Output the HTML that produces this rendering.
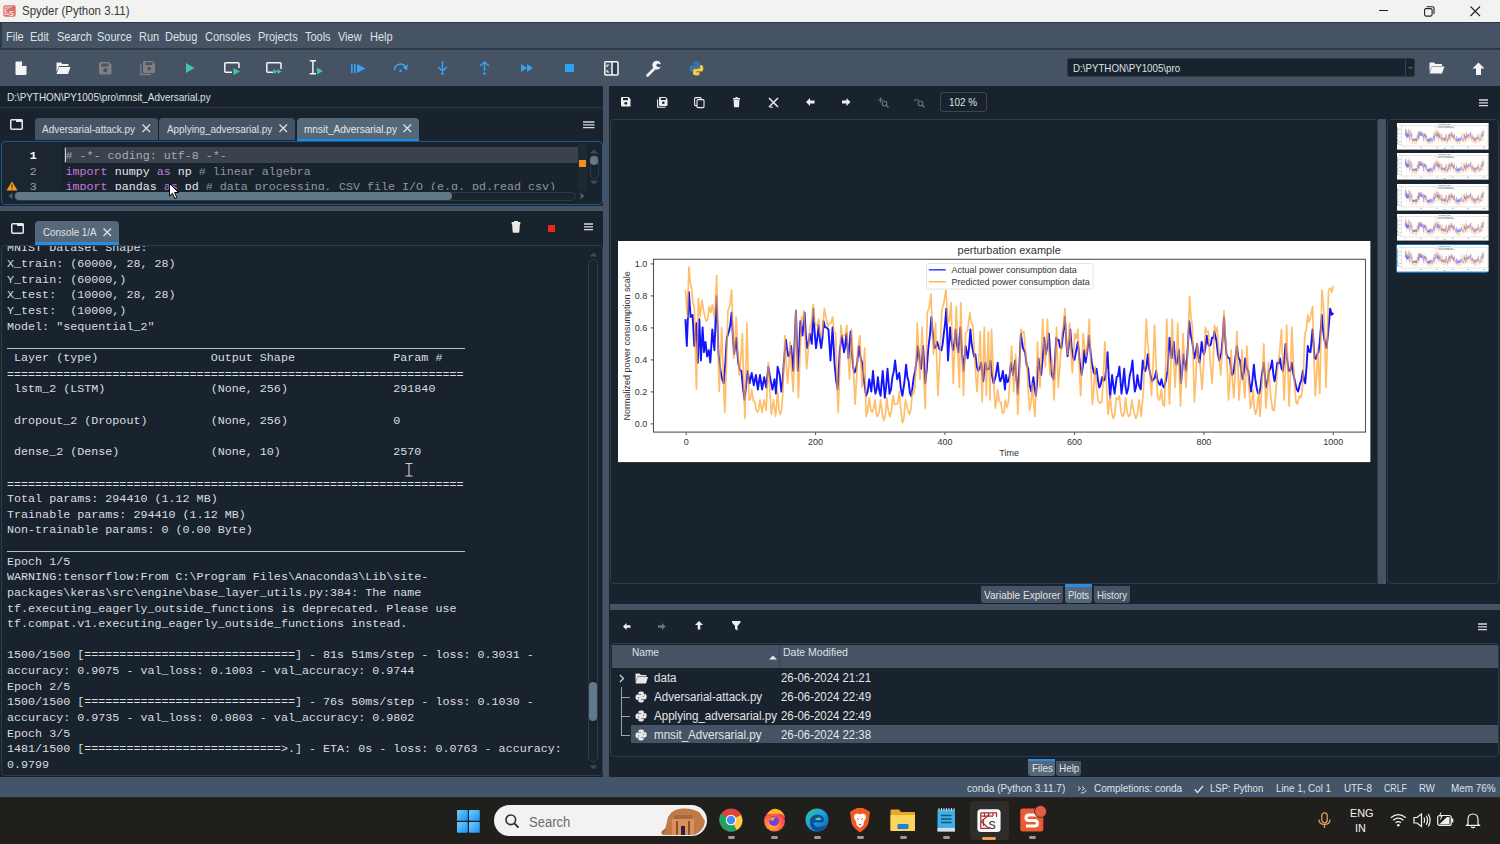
<!DOCTYPE html>
<html><head><meta charset="utf-8">
<style>
*{margin:0;padding:0;box-sizing:border-box}
html,body{width:1500px;height:844px;overflow:hidden;background:#19232d;font-family:"Liberation Sans",sans-serif;color:#e0e1e3;position:relative}
.a{position:absolute}
.t{line-height:1;white-space:pre}
svg{overflow:visible}
</style></head><body>
<!-- p1 -->
<div class="a" style="left:0px;top:0px;width:1500px;height:22px;background:#f2f2f1;"></div>
<svg class="a" style="left:3px;top:5px;" width="13" height="12" viewBox="0 0 13 12"><rect x="0.3" y="0.3" width="12.4" height="11.4" rx="2" fill="#d9706e"/><path d="M2 2 H9 M2 2 V9.5 H6 M2 6 L6 2.5 M2 6 L6 9.5" fill="none" stroke="#f6dede" stroke-width="0.9"/><text x="6" y="10.8" font-size="9.5" font-family="Liberation Sans" fill="#fff">s</text></svg>
<div class="a t" style="left:21.5px;top:5.24px;font-size:12px;font-family:'Liberation Sans',sans-serif;color:#383838;transform:scaleX(0.955);transform-origin:0 0;">Spyder (Python 3.11)</div>
<div class="a" style="left:1379px;top:10px;width:9px;height:1px;background:#222;"></div>
<svg class="a" style="left:1424px;top:6px;" width="11" height="11" viewBox="0 0 11 11"><rect x="0.6" y="2.6" width="7.5" height="7.5" rx="1.5" fill="none" stroke="#222" stroke-width="1.1"/><path d="M2.6 0.8 H8.5 A1.5 1.5 0 0 1 10 2.3 V8" fill="none" stroke="#222" stroke-width="1.1"/></svg>
<svg class="a" style="left:1470px;top:6px;" width="11" height="11" viewBox="0 0 11 11"><path d="M0.5 0.5 L10 10 M10 0.5 L0.5 10" stroke="#222" stroke-width="1.1"/></svg>
<div class="a" style="left:0px;top:22px;width:1500px;height:28px;background:#455364;"></div>
<div class="a" style="left:0px;top:22px;width:1500px;height:1px;background:#2c3744;"></div>
<div class="a" style="left:0px;top:48px;width:1500px;height:1.5px;background:#2f3a47;"></div>
<div class="a" style="left:0px;top:22px;width:1.5px;height:27px;background:#2f3a47;"></div>
<div class="a t" style="left:5.6px;top:30.57px;font-size:12.2px;font-family:'Liberation Sans',sans-serif;color:#dfe1e4;transform:scaleX(0.9);transform-origin:0 0;">File</div>
<div class="a t" style="left:29.6px;top:30.57px;font-size:12.2px;font-family:'Liberation Sans',sans-serif;color:#dfe1e4;transform:scaleX(0.9);transform-origin:0 0;">Edit</div>
<div class="a t" style="left:56.5px;top:30.57px;font-size:12.2px;font-family:'Liberation Sans',sans-serif;color:#dfe1e4;transform:scaleX(0.9);transform-origin:0 0;">Search</div>
<div class="a t" style="left:97px;top:30.57px;font-size:12.2px;font-family:'Liberation Sans',sans-serif;color:#dfe1e4;transform:scaleX(0.9);transform-origin:0 0;">Source</div>
<div class="a t" style="left:138.5px;top:30.57px;font-size:12.2px;font-family:'Liberation Sans',sans-serif;color:#dfe1e4;transform:scaleX(0.9);transform-origin:0 0;">Run</div>
<div class="a t" style="left:164.5px;top:30.57px;font-size:12.2px;font-family:'Liberation Sans',sans-serif;color:#dfe1e4;transform:scaleX(0.9);transform-origin:0 0;">Debug</div>
<div class="a t" style="left:205.4px;top:30.57px;font-size:12.2px;font-family:'Liberation Sans',sans-serif;color:#dfe1e4;transform:scaleX(0.9);transform-origin:0 0;">Consoles</div>
<div class="a t" style="left:258.2px;top:30.57px;font-size:12.2px;font-family:'Liberation Sans',sans-serif;color:#dfe1e4;transform:scaleX(0.9);transform-origin:0 0;">Projects</div>
<div class="a t" style="left:305px;top:30.57px;font-size:12.2px;font-family:'Liberation Sans',sans-serif;color:#dfe1e4;transform:scaleX(0.9);transform-origin:0 0;">Tools</div>
<div class="a t" style="left:338.4px;top:30.57px;font-size:12.2px;font-family:'Liberation Sans',sans-serif;color:#dfe1e4;transform:scaleX(0.9);transform-origin:0 0;">View</div>
<div class="a t" style="left:370px;top:30.57px;font-size:12.2px;font-family:'Liberation Sans',sans-serif;color:#dfe1e4;transform:scaleX(0.9);transform-origin:0 0;">Help</div>
<div class="a" style="left:0px;top:50px;width:1500px;height:36px;background:#455364;"></div>
<svg class="a" style="left:15px;top:61px;" width="12" height="15" viewBox="0 0 12 15"><path d="M0.5 1.5 Q0.5 0.5 1.5 0.5 H7 L11.5 5 V13 Q11.5 14 10.5 14 H1.5 Q0.5 14 0.5 13 Z" fill="#f4f4f4"/><path d="M7 0.5 V5 H11.5" fill="#455364"/><path d="M7.8 1.5 L10.8 4.5 H7.8Z" fill="#555"/></svg>
<svg class="a" style="left:56px;top:62px;" width="15" height="13" viewBox="0 0 15 13"><path d="M0.5 1 Q0.5 0.5 1 0.5 H5 L6.5 2 H12 Q12.5 2 12.5 2.5 V4 H3 L0.5 10Z" fill="#f4f4f4"/><path d="M3 5 H14.5 L12 12 H0.5Z" fill="#f4f4f4"/></svg>
<svg class="a" style="left:99px;top:62px;" width="13" height="13" viewBox="0 0 13 13"><path d="M0 1.5 Q0 0 1.5 0 H10 L12.5 2.5 V11 Q12.5 12.5 11 12.5 H1.5 Q0 12.5 0 11Z" fill="#7d7f82"/><rect x="2.5" y="1.5" width="7" height="3" fill="#455364"/><circle cx="6.2" cy="8.3" r="2" fill="#455364"/></svg>
<svg class="a" style="left:140px;top:61px;" width="16" height="15" viewBox="0 0 16 15"><path d="M0.8 3.5 V13.5 H11" fill="none" stroke="#7d7f82" stroke-width="1.3"/><path d="M3 1.5 Q3 0 4.5 0 H12.5 L15 2.5 V10.5 Q15 12 13.5 12 H4.5 Q3 12 3 10.5Z" fill="#7d7f82"/><rect x="5.5" y="1.3" width="7" height="2.7" fill="#455364"/><circle cx="9" cy="7.8" r="1.8" fill="#455364"/></svg>
<svg class="a" style="left:186px;top:63px;" width="9" height="11" viewBox="0 0 9 11"><path d="M0 0 L8.5 5 L0 10Z" fill="#3ec7a6"/></svg>
<svg class="a" style="left:224px;top:62px;" width="17" height="14" viewBox="0 0 17 14"><path d="M8 10.3 H1.8 Q0.8 10.3 0.8 9.3 V1.8 Q0.8 0.8 1.8 0.8 H14 Q15 0.8 15 1.8 V6" fill="none" stroke="#f4f4f4" stroke-width="1.5"/><path d="M9.5 6 L16 9.5 L9.5 13Z" fill="#3ec7a6"/></svg>
<svg class="a" style="left:266px;top:62px;" width="17" height="14" viewBox="0 0 17 14"><path d="M7 10.3 H1.8 Q0.8 10.3 0.8 9.3 V1.8 Q0.8 0.8 1.8 0.8 H14 Q15 0.8 15 1.8 V7" fill="none" stroke="#f4f4f4" stroke-width="1.5"/><path d="M7.5 7 L11.5 9.5 L7.5 12Z M11.5 7 L15.5 9.5 L11.5 12Z" fill="#3ec7a6"/></svg>
<svg class="a" style="left:309px;top:60px;" width="15" height="16" viewBox="0 0 15 16"><path d="M0.8 0.8 H7 M0.8 13.8 H7 M3.9 0.8 V13.8" fill="none" stroke="#f4f4f4" stroke-width="1.5"/><path d="M8 7.5 L14 11 L8 14.5Z" fill="#3ec7a6"/></svg>
<svg class="a" style="left:351px;top:64px;" width="16" height="10" viewBox="0 0 16 10"><rect x="0" y="0" width="1.6" height="9" fill="#37a3f2"/><rect x="3" y="0" width="1.6" height="9" fill="#37a3f2"/><path d="M6 0 L14.5 4.5 L6 9Z" fill="#37a3f2"/></svg>
<svg class="a" style="left:393px;top:62px;" width="17" height="11" viewBox="0 0 17 11"><path d="M1.5 8.5 A6 6 0 0 1 12.5 4.8" fill="none" stroke="#37a3f2" stroke-width="1.6"/><path d="M9.5 5.5 L15 2.5 L14 8.5Z" fill="#37a3f2"/><circle cx="7.5" cy="8.7" r="1.3" fill="#37a3f2"/></svg>
<svg class="a" style="left:437px;top:61px;" width="12" height="15" viewBox="0 0 12 15"><path d="M5.5 0 V9.5 M1 6 L5.5 10 L10 6" fill="none" stroke="#37a3f2" stroke-width="1.5"/><circle cx="5.5" cy="12.6" r="1.3" fill="#37a3f2"/></svg>
<svg class="a" style="left:479px;top:61px;" width="12" height="15" viewBox="0 0 12 15"><path d="M5.5 1 V10 M1 5 L5.5 1 L10 5" fill="none" stroke="#37a3f2" stroke-width="1.5"/><circle cx="5.5" cy="12.6" r="1.3" fill="#37a3f2"/></svg>
<svg class="a" style="left:521px;top:64px;" width="13" height="9" viewBox="0 0 13 9"><path d="M0 0 L6 4 L0 8Z M6 0 L12 4 L6 8Z" fill="#37a3f2"/></svg>
<div class="a" style="left:564.6px;top:63.8px;width:9px;height:8.6px;background:#2ea0f5;"></div>
<svg class="a" style="left:604px;top:61px;" width="15" height="15" viewBox="0 0 15 15"><rect x="0.8" y="0.8" width="13.2" height="13.2" rx="1" fill="none" stroke="#f4f4f4" stroke-width="1.5"/><path d="M8 1 V14" stroke="#f4f4f4" stroke-width="1.5"/><path d="M3 4 H5 M3 11 H5 M3 4 V6 M3 9 V11" stroke="#f4f4f4" stroke-width="1.2"/><rect x="9" y="2" width="4" height="11" fill="#19232d" opacity="0.5"/></svg>
<svg class="a" style="left:646px;top:61px;" width="17" height="16" viewBox="0 0 17 16"><path d="M1.5 14.5 L9 7" stroke="#f4f4f4" stroke-width="2.6" stroke-linecap="round"/><path d="M8 7.5 A4.3 4.3 0 1 1 14.8 3 L12.6 3.5 L11.5 5.5 L13 6.5 L15 5.5 A4.3 4.3 0 0 1 8 7.5Z" fill="#f4f4f4"/><circle cx="12" cy="4.2" r="1.6" fill="#455364"/></svg>
<svg class="a" style="left:689px;top:61px;" width="15" height="15" viewBox="0 0 15 15"><path d="M7.3 0.5 C4 0.5 4.2 2 4.2 2 V3.8 H7.5 V4.4 H2.8 C2.8 4.4 0.5 4.1 0.5 7.6 C0.5 11 2.5 10.9 2.5 10.9 H3.7 V9.2 C3.7 9.2 3.6 7.3 5.6 7.3 H8.9 C8.9 7.3 10.8 7.3 10.8 5.5 V2.4 C10.8 2.4 11.1 0.5 7.3 0.5Z" fill="#3b75b4"/><path d="M7.5 14.5 C10.8 14.5 10.6 13 10.6 13 V11.2 H7.3 V10.6 H12 C12 10.6 14.3 10.9 14.3 7.4 C14.3 4 12.3 4.1 12.3 4.1 H11.1 V5.8 C11.1 5.8 11.2 7.7 9.2 7.7 H5.9 C5.9 7.7 4 7.7 4 9.5 V12.6 C4 12.6 3.7 14.5 7.5 14.5Z" fill="#f2cc3a"/></svg>
<svg class="a" style="left:1067px;top:58px;" width="348" height="19" viewBox="0 0 348 19"><rect x="0.5" y="0.5" width="347" height="18" rx="2" fill="#19232d" stroke="#2c3744"/><path d="M338.5 1 V18" stroke="#37414f"/><path d="M341 9 L343.5 11 L346 9" fill="#5a6675"/></svg>
<div class="a t" style="left:1073.4px;top:62.52px;font-size:11.2px;font-family:'Liberation Sans',sans-serif;color:#dfe1e4;transform:scaleX(0.87);transform-origin:0 0;">D:\PYTHON\PY1005\pro</div>
<svg class="a" style="left:1429px;top:62px;" width="16" height="12" viewBox="0 0 16 12"><path d="M0.5 1 Q0.5 0.5 1 0.5 H5 L6.5 2 H12.5 Q13 2 13 2.5 V4 H3 L0.5 10Z" fill="#f4f4f4"/><path d="M3 4.5 H15.5 L13 11.5 H0.5Z" fill="#f4f4f4"/></svg>
<svg class="a" style="left:1472px;top:62px;" width="13" height="14" viewBox="0 0 13 14"><path d="M6.5 0.5 L12.5 6.5 H9 V13 H4 V6.5 H0.5Z" fill="#f4f4f4"/></svg>
<!-- p2 -->
<div class="a t" style="left:6.9px;top:91.99px;font-size:11px;font-family:'Liberation Sans',sans-serif;color:#dfe1e4;transform:scaleX(0.9);transform-origin:0 0;">D:\PYTHON\PY1005\pro\mnsit_Adversarial.py</div>
<div class="a" style="left:0px;top:107px;width:603px;height:1px;background:#2d3845;"></div>
<svg class="a" style="left:10px;top:119px;" width="13" height="11" viewBox="0 0 13 11"><rect x="0.75" y="0.75" width="11.5" height="9.5" rx="1" fill="none" stroke="#e8e8e8" stroke-width="1.5"/><rect x="6" y="0.5" width="6.5" height="2.5" fill="#e8e8e8"/></svg>
<div class="a" style="left:34.5px;top:118.2px;width:123px;height:21.5px;background:#455364;border-radius:4px 4px 0 0"></div>
<div class="a t" style="left:42.2px;top:124.19px;font-size:11px;font-family:'Liberation Sans',sans-serif;color:#dfe1e4;transform:scaleX(0.905);transform-origin:0 0;">Adversarial-attack.py</div>
<svg class="a" style="left:142px;top:123.8px;" width="8.5" height="8.5" viewBox="0 0 8.5 8.5"><path d="M0.5 0.5 L8.0 8.0 M8.0 0.5 L0.5 8.0" stroke="#e0e1e3" stroke-width="1.3"/></svg>
<div class="a" style="left:159.3px;top:118.2px;width:135.4px;height:21.5px;background:#455364;border-radius:4px 4px 0 0"></div>
<div class="a t" style="left:167.2px;top:124.19px;font-size:11px;font-family:'Liberation Sans',sans-serif;color:#dfe1e4;transform:scaleX(0.9);transform-origin:0 0;">Applying_adversarial.py</div>
<svg class="a" style="left:278.8px;top:123.8px;" width="8.5" height="8.5" viewBox="0 0 8.5 8.5"><path d="M0.5 0.5 L8.0 8.0 M8.0 0.5 L0.5 8.0" stroke="#e0e1e3" stroke-width="1.3"/></svg>
<div class="a" style="left:296.5px;top:118.2px;width:122.3px;height:23px;background:#54687a;border-radius:4px 4px 0 0"></div>
<div class="a" style="left:296.5px;top:138.9px;width:122.3px;height:2.8px;background:#1a8ae6;"></div>
<div class="a t" style="left:304px;top:124.19px;font-size:11px;font-family:'Liberation Sans',sans-serif;color:#e6e7e9;transform:scaleX(0.91);transform-origin:0 0;">mnsit_Adversarial.py</div>
<svg class="a" style="left:402.7px;top:123.8px;" width="8.5" height="8.5" viewBox="0 0 8.5 8.5"><path d="M0.5 0.5 L8.0 8.0 M8.0 0.5 L0.5 8.0" stroke="#e0e1e3" stroke-width="1.3"/></svg>
<svg class="a" style="left:583px;top:120.5px;" width="11.5" height="9" viewBox="0 0 11.5 9"><path d="M0 1 H11.5 M0 3.8 H11.5 M0 6.6 H11.5" stroke="#d8dadc" stroke-width="1.3"/></svg>
<div class="a" style="left:0.5px;top:141px;width:602.5px;height:63.5px;background:#19232d;border:1.6px solid #1f5a8c;border-radius:4px"></div>
<div class="a" style="left:2.5px;top:143px;width:59.5px;height:48px;background:#1c2630;"></div>
<div class="a" style="left:64px;top:147px;width:514px;height:15.7px;background:#3a434c;"></div>
<div class="a" style="left:64.5px;top:148px;width:1.2px;height:14px;background:#d0d0d0;"></div>
<div class="a" style="left:578px;top:143px;width:9px;height:48px;background:#1f2932;"></div>
<div class="a" style="left:578.5px;top:160px;width:7.8px;height:7px;background:#f0901c;"></div>
<div class="a t" style="left:29.8px;top:150.45px;font-size:11.55px;font-family:'Liberation Mono',monospace;color:#ffffff;font-weight:bold">1</div>
<div class="a t" style="left:29.8px;top:165.95px;font-size:11.55px;font-family:'Liberation Mono',monospace;color:#9da3a8;">2</div>
<div class="a t" style="left:29.8px;top:181.45px;font-size:11.55px;font-family:'Liberation Mono',monospace;color:#9da3a8;">3</div>
<svg class="a" style="left:6px;top:180.5px;" width="12" height="10" viewBox="0 0 12 10"><path d="M6 0.5 L11.5 9.5 H0.5Z" fill="#f39c1f"/><path d="M6 3.5 V6.5" stroke="#3a2a10" stroke-width="1.2"/><circle cx="6" cy="8" r="0.6" fill="#3a2a10"/></svg>
<div class="a t" style="left:65.6px;top:151.05px;font-size:11.68px;font-family:'Liberation Mono',monospace;color:#a7adb2;"># -*- coding: utf-8 -*-</div>
<div class="a t" style="left:65.6px;top:166.65px;font-size:11.68px;font-family:'Liberation Mono',monospace;color:#c679dd;">import</div>
<div class="a t" style="left:107.66px;top:166.65px;font-size:11.68px;font-family:'Liberation Mono',monospace;color:#e6e6e6;"> numpy </div>
<div class="a t" style="left:156.73px;top:166.65px;font-size:11.68px;font-family:'Liberation Mono',monospace;color:#c679dd;">as</div>
<div class="a t" style="left:170.75px;top:166.65px;font-size:11.68px;font-family:'Liberation Mono',monospace;color:#e6e6e6;"> np </div>
<div class="a t" style="left:198.79px;top:166.65px;font-size:11.68px;font-family:'Liberation Mono',monospace;color:#8e969e;"># linear algebra</div>
<div class="a" style="left:0;top:178px;width:578px;height:12.3px;overflow:hidden"><div class="a t" style="left:65.6px;top:4.25px;font-size:11.68px;font-family:'Liberation Mono',monospace;color:#c679dd;">import</div>
<div class="a t" style="left:107.66px;top:4.25px;font-size:11.68px;font-family:'Liberation Mono',monospace;color:#e6e6e6;"> pandas </div>
<div class="a t" style="left:163.74px;top:4.25px;font-size:11.68px;font-family:'Liberation Mono',monospace;color:#c679dd;">as</div>
<div class="a t" style="left:177.76000000000002px;top:4.25px;font-size:11.68px;font-family:'Liberation Mono',monospace;color:#e6e6e6;"> pd </div>
<div class="a t" style="left:205.8px;top:4.25px;font-size:11.68px;font-family:'Liberation Mono',monospace;color:#8e969e;"># data processing, CSV file I/O (e.g. pd.read_csv)</div>
</div>
<div class="a" style="left:2.5px;top:191.3px;width:585px;height:10px;background:#19232d;"></div>
<div class="a" style="left:14px;top:191.5px;width:562px;height:9px;background:#1b252f;border:1px solid #2e3a46;border-radius:4.5px"></div>
<div class="a" style="left:15px;top:192.3px;width:437px;height:7.6px;background:#60798b;border-radius:4px"></div>
<svg class="a" style="left:8px;top:192px;" width="5" height="8" viewBox="0 0 5 8"><path d="M4.5 0.5 V7.5 L0.5 4Z" fill="#4a5a68"/></svg>
<svg class="a" style="left:580px;top:192px;" width="5" height="8" viewBox="0 0 5 8"><path d="M0.5 0.5 V7.5 L4.5 4Z" fill="#4a5a68"/></svg>
<svg class="a" style="left:589px;top:149px;" width="10" height="5" viewBox="0 0 10 5"><path d="M0.5 4.5 L5 0.5 L9.5 4.5Z" fill="#3d4a57"/></svg>
<div class="a" style="left:589.5px;top:155px;width:9px;height:23.5px;background:#19232d;border:1px solid #2e3a46;border-radius:4.5px"></div>
<div class="a" style="left:590.3px;top:156px;width:7.6px;height:9px;background:#60798b;border-radius:4px"></div>
<svg class="a" style="left:589px;top:180px;" width="10" height="5" viewBox="0 0 10 5"><path d="M0.5 0.5 L5 4.5 L9.5 0.5Z" fill="#3d4a57"/></svg>
<svg class="a" style="left:11px;top:222.5px;" width="13" height="11" viewBox="0 0 13 11"><rect x="0.75" y="0.75" width="11.5" height="9.5" rx="1" fill="none" stroke="#e8e8e8" stroke-width="1.5"/><rect x="6" y="0.5" width="6.5" height="2.5" fill="#e8e8e8"/></svg>
<div class="a" style="left:35.3px;top:221.3px;width:83.5px;height:23.3px;background:#54687a;border-radius:4px 4px 0 0"></div>
<div class="a" style="left:35.3px;top:242.2px;width:83.5px;height:2.5px;background:#2a8ce0;"></div>
<div class="a t" style="left:43px;top:226.69px;font-size:11px;font-family:'Liberation Sans',sans-serif;color:#e2e3e5;transform:scaleX(0.895);transform-origin:0 0;">Console 1/A</div>
<svg class="a" style="left:102.7px;top:227.5px;" width="8.5" height="8.5" viewBox="0 0 8.5 8.5"><path d="M0.5 0.5 L8.0 8.0 M8.0 0.5 L0.5 8.0" stroke="#e0e1e3" stroke-width="1.3"/></svg>
<svg class="a" style="left:511px;top:221px;" width="10" height="12" viewBox="0 0 10 12"><path d="M1 2 H9 L8.3 11 Q8.2 11.8 7.4 11.8 H2.6 Q1.8 11.8 1.7 11 Z" fill="#e8e8e8"/><rect x="0.5" y="1" width="9" height="1.8" rx="0.5" fill="#e8e8e8"/><rect x="3" y="0" width="4" height="1.5" fill="#e8e8e8"/></svg>
<div class="a" style="left:548px;top:225px;width:7px;height:6.5px;background:#e8281a;"></div>
<svg class="a" style="left:584px;top:223px;" width="9" height="9" viewBox="0 0 9 9"><path d="M0 1 H9 M0 3.8 H9 M0 6.6 H9" stroke="#d8dadc" stroke-width="1.3"/></svg>
<div class="a" style="left:1px;top:245px;width:602px;height:531px;background:#19232d;border:1px solid #2f3b47;border-radius:4px"></div>
<div class="a" style="left:2px;top:246px;width:585px;height:528px;overflow:hidden">
<pre class="a" style="left:5px;top:-4.59px;font-family:'Liberation Mono',monospace;font-size:11.71px;line-height:15.65px;color:#dcdde0">MNIST Dataset Shape:
X_train: (60000, 28, 28)
Y_train: (60000,)
X_test:  (10000, 28, 28)
Y_test:  (10000,)
Model: "sequential_2"

 Layer (type)                Output Shape              Param #   

 lstm_2 (LSTM)               (None, 256)               291840    

 dropout_2 (Dropout)         (None, 256)               0         

 dense_2 (Dense)             (None, 10)                2570      


Total params: 294410 (1.12 MB)
Trainable params: 294410 (1.12 MB)
Non-trainable params: 0 (0.00 Byte)

Epoch 1/5
WARNING:tensorflow:From C:\Program Files\Anaconda3\Lib\site-
packages\keras\src\engine\base_layer_utils.py:384: The name
tf.executing_eagerly_outside_functions is deprecated. Please use
tf.compat.v1.executing_eagerly_outside_functions instead.

1500/1500 [==============================] - 81s 51ms/step - loss: 0.3031 -
accuracy: 0.9075 - val_loss: 0.1003 - val_accuracy: 0.9744
Epoch 2/5
1500/1500 [==============================] - 76s 50ms/step - loss: 0.1030 -
accuracy: 0.9735 - val_loss: 0.0803 - val_accuracy: 0.9802
Epoch 3/5
1481/1500 [============================&gt;.] - ETA: 0s - loss: 0.0763 - accuracy:
0.9799</pre>
</div>
<div class="a" style="left:7px;top:347.6px;width:457.5px;height:1.1px;background:#b8bdc3;"></div>
<div class="a t" style="left:7px;top:370.18px;font-size:11.71px;font-family:'Liberation Mono',monospace;color:#dcdde0;">=================================================================</div>
<div class="a t" style="left:7px;top:479.73px;font-size:11.71px;font-family:'Liberation Mono',monospace;color:#dcdde0;">=================================================================</div>
<div class="a" style="left:7px;top:550.8px;width:457.5px;height:1.1px;background:#b8bdc3;"></div>
<svg class="a" style="left:589px;top:252px;" width="9" height="5" viewBox="0 0 9 5"><path d="M0.5 4.5 L4.5 0.5 L8.5 4.5Z" fill="#3d4a57"/></svg>
<div class="a" style="left:588.3px;top:259px;width:10px;height:503px;background:#19232d;border:1px solid #2e3a46;border-radius:5px"></div>
<div class="a" style="left:589.3px;top:682.3px;width:7.8px;height:38.6px;background:#60798b;border-radius:4px"></div>
<svg class="a" style="left:589px;top:765px;" width="9" height="5" viewBox="0 0 9 5"><path d="M0.5 0.5 L4.5 4.5 L8.5 0.5Z" fill="#3d4a57"/></svg>
<svg class="a" style="left:169px;top:183px;" width="11" height="17" viewBox="0 0 11 17"><path d="M0.5 0.5 V13 L3.5 10.3 L5.8 15.5 L7.8 14.6 L5.6 9.5 H9.5Z" fill="#fff" stroke="#000" stroke-width="1"/></svg>
<svg class="a" style="left:405px;top:463px;" width="8" height="14" viewBox="0 0 8 14"><path d="M0.5 0.5 H7.5 M4 0.5 V13 M0.5 13 H7.5" stroke="#cfd0d2" stroke-width="1.1"/></svg>
<!-- p3 -->
<div class="a" style="left:603px;top:86px;width:6px;height:692px;background:#455364;"></div>
<div class="a" style="left:0px;top:205.6px;width:603px;height:5.4px;background:#455364;"></div>
<div class="a" style="left:610px;top:604px;width:890px;height:6px;background:#455364;"></div>
<svg class="a" style="left:621px;top:97px;" width="10" height="10" viewBox="0 0 10 10"><path d="M0 1 Q0 0 1 0 H7.5 L9.5 2 V9 Q9.5 9.5 9 9.5 H1 Q0 9.5 0 8.5Z" fill="#eeeeee"/><rect x="2" y="1" width="5" height="2.2" fill="#19232d"/><circle cx="4.8" cy="6.3" r="1.4" fill="#19232d"/></svg>
<svg class="a" style="left:657px;top:97px;" width="11" height="11" viewBox="0 0 11 11"><path d="M0.6 2.5 V10.2 H8.5" fill="none" stroke="#eeeeee" stroke-width="1.1"/><path d="M2 1 Q2 0 3 0 H8.5 L10.5 2 V8 Q10.5 9 9.5 9 H3 Q2 9 2 8Z" fill="#eeeeee"/><rect x="3.8" y="1" width="5" height="2" fill="#19232d"/><circle cx="6.3" cy="5.8" r="1.3" fill="#19232d"/></svg>
<svg class="a" style="left:694px;top:97px;" width="11" height="11" viewBox="0 0 11 11"><rect x="0.6" y="0.6" width="6.5" height="8" rx="1" fill="none" stroke="#eeeeee" stroke-width="1.1"/><rect x="3" y="2.6" width="7" height="8" rx="1" fill="#19232d" stroke="#eeeeee" stroke-width="1.1"/></svg>
<svg class="a" style="left:733px;top:97px;" width="8" height="11" viewBox="0 0 8 11"><rect x="0" y="1" width="7" height="1.6" fill="#eeeeee"/><rect x="2.5" y="0" width="2" height="1.2" fill="#eeeeee"/><path d="M0.6 3 H6.4 L6 10.2 H1Z" fill="#eeeeee"/></svg>
<svg class="a" style="left:768px;top:97px;" width="11" height="11" viewBox="0 0 11 11"><path d="M1 1 L10 10 M10 1 L1 10" stroke="#eeeeee" stroke-width="1.5"/><path d="M2 10.2 H5" stroke="#eeeeee" stroke-width="1"/></svg>
<svg class="a" style="left:806px;top:98px;" width="9" height="8" viewBox="0 0 9 8"><path d="M0 4 L4 0 V2.5 H8.5 V5.5 H4 V8Z" fill="#eeeeee"/></svg>
<svg class="a" style="left:842px;top:98px;" width="9" height="8" viewBox="0 0 9 8"><path d="M8.5 4 L4.5 0 V2.5 H0 V5.5 H4.5 V8Z" fill="#eeeeee"/></svg>
<svg class="a" style="left:878px;top:97px;" width="11" height="11" viewBox="0 0 11 11"><path d="M0 3 H5 M2.5 0.5 V5.5" stroke="#6b747c" stroke-width="1.1"/><circle cx="6.5" cy="6.5" r="2.3" fill="none" stroke="#6b747c" stroke-width="1.1"/><path d="M8.2 8.2 L10.5 10.5" stroke="#6b747c" stroke-width="1.3"/></svg>
<svg class="a" style="left:914px;top:97px;" width="11" height="11" viewBox="0 0 11 11"><path d="M0 3 H5" stroke="#6b747c" stroke-width="1.1"/><circle cx="6.5" cy="6.5" r="2.3" fill="none" stroke="#6b747c" stroke-width="1.1"/><path d="M8.2 8.2 L10.5 10.5" stroke="#6b747c" stroke-width="1.3"/></svg>
<div class="a" style="left:940px;top:92px;width:46.7px;height:20px;background:#19232d;border:1px solid #3a4653;border-radius:3px"></div>
<div class="a t" style="left:949px;top:96.59px;font-size:11px;font-family:'Liberation Sans',sans-serif;color:#dfe1e4;transform:scaleX(0.9);transform-origin:0 0;">102 %</div>
<svg class="a" style="left:1478.5px;top:98.5px;" width="9" height="9" viewBox="0 0 9 9"><path d="M0 1 H9 M0 3.8 H9 M0 6.6 H9" stroke="#d8dadc" stroke-width="1.3"/></svg>
<div class="a" style="left:610px;top:118.8px;width:768px;height:465px;background:#19232d;border:1px solid #2f3b47;border-radius:4px"></div>
<div class="a" style="left:1378px;top:119px;width:8px;height:464.5px;background:#455364;"></div>
<div class="a" style="left:1386.5px;top:119.2px;width:112.3px;height:464.8px;background:#19232d;border:1px solid #2f3b47;border-radius:4px"></div>
<div class="a" style="left:980.7px;top:586px;width:82.2px;height:16.7px;background:#455364;border-radius:0 0 3px 3px"></div>
<div class="a t" style="left:983.5px;top:590.09px;font-size:11px;font-family:'Liberation Sans',sans-serif;color:#e0e1e3;transform:scaleX(0.915);transform-origin:0 0;">Variable Explorer</div>
<div class="a" style="left:1065px;top:584px;width:27px;height:18.7px;background:#54687a;border-radius:0 0 3px 3px"></div>
<div class="a" style="left:1065px;top:584px;width:27px;height:3px;background:#2a8ce0;"></div>
<div class="a t" style="left:1068px;top:590.09px;font-size:11px;font-family:'Liberation Sans',sans-serif;color:#e0e1e3;transform:scaleX(0.86);transform-origin:0 0;">Plots</div>
<div class="a" style="left:1094px;top:586px;width:36px;height:16.7px;background:#455364;border-radius:0 0 3px 3px"></div>
<div class="a t" style="left:1097px;top:590.09px;font-size:11px;font-family:'Liberation Sans',sans-serif;color:#e0e1e3;transform:scaleX(0.88);transform-origin:0 0;">History</div>
<svg class="a" style="left:622.7px;top:622.5px;" width="8" height="7" viewBox="0 0 8 7"><path d="M0 3.5 L3.5 0 V2.2 H7.5 V4.8 H3.5 V7Z" fill="#eeeeee"/></svg>
<svg class="a" style="left:658px;top:622.5px;" width="8" height="7" viewBox="0 0 8 7"><path d="M7.5 3.5 L4 0 V2.2 H0 V4.8 H4 V7Z" fill="#6b747c"/></svg>
<svg class="a" style="left:695px;top:621px;" width="8" height="9" viewBox="0 0 8 9"><path d="M4 0 L8 4 H5.3 V8.5 H2.7 V4 H0Z" fill="#eeeeee"/></svg>
<svg class="a" style="left:732px;top:621px;" width="9" height="10" viewBox="0 0 9 10"><path d="M0 0 H8.5 V1.5 L5.5 5 V9.5 L3 8 V5 L0 1.5Z" fill="#eeeeee"/></svg>
<svg class="a" style="left:1478px;top:622.5px;" width="9" height="9" viewBox="0 0 9 9"><path d="M0 1 H9 M0 3.8 H9 M0 6.6 H9" stroke="#d8dadc" stroke-width="1.3"/></svg>
<div class="a" style="left:610px;top:643px;width:888.5px;height:114.3px;background:#19232d;border:1px solid #2f3b47;border-radius:4px"></div>
<div class="a" style="left:612px;top:644.8px;width:886px;height:23.2px;background:#455364;"></div>
<div class="a" style="left:779px;top:645px;width:1.3px;height:23px;background:#37414f;"></div>
<div class="a t" style="left:632px;top:647.49px;font-size:11px;font-family:'Liberation Sans',sans-serif;color:#dfe1e4;transform:scaleX(0.92);transform-origin:0 0;">Name</div>
<svg class="a" style="left:769px;top:655px;" width="8" height="5" viewBox="0 0 8 5"><path d="M0 4.5 L4 0.5 L8 4.5Z" fill="#e8e8e8"/></svg>
<div class="a t" style="left:783px;top:647.49px;font-size:11px;font-family:'Liberation Sans',sans-serif;color:#dfe1e4;transform:scaleX(0.955);transform-origin:0 0;">Date Modified</div>
<div class="a" style="left:631px;top:724.8px;width:867px;height:18.7px;background:#455364;"></div>
<div class="a" style="left:621px;top:687px;width:1px;height:48.5px;background:#9aa2aa;"></div>
<div class="a" style="left:621px;top:697px;width:9px;height:1px;background:#9aa2aa;"></div>
<div class="a" style="left:621px;top:716px;width:9px;height:1px;background:#9aa2aa;"></div>
<div class="a" style="left:621px;top:735px;width:9px;height:1px;background:#9aa2aa;"></div>
<svg class="a" style="left:618.5px;top:674px;" width="6" height="9" viewBox="0 0 6 9"><path d="M0.8 0.8 L4.5 4.5 L0.8 8.2" fill="none" stroke="#dfe1e4" stroke-width="1.2"/></svg>
<svg class="a" style="left:635px;top:672.5px;" width="13" height="11" viewBox="0 0 13 11"><path d="M0.5 1 Q0.5 0.5 1 0.5 H4.5 L6 2 H11 Q11.5 2 11.5 2.5 V3.5 H2.5 L0.5 9Z" fill="#e8e8e8"/><path d="M2.5 4 H13 L11 10.5 H0.5Z" fill="#e8e8e8"/></svg>
<div class="a t" style="left:654px;top:672.24px;font-size:12px;font-family:'Liberation Sans',sans-serif;color:#e4e5e7;transform:scaleX(0.965);transform-origin:0 0;">data</div>
<div class="a t" style="left:781px;top:672.24px;font-size:12px;font-family:'Liberation Sans',sans-serif;color:#e4e5e7;transform:scaleX(0.95);transform-origin:0 0;">26-06-2024 21:21</div>
<svg class="a" style="left:635px;top:690.9px;" width="12" height="12" viewBox="0 0 12 12"><path d="M6 0.5 C3.3 0.5 3.5 1.7 3.5 1.7 V3.1 H6.2 V3.6 H2.3 C2.3 3.6 0.5 3.4 0.5 6.2 C0.5 9 2.1 8.9 2.1 8.9 H3 V7.6 C3 7.6 2.9 6 4.6 6 H7.3 C7.3 6 8.9 6 8.9 4.5 V2 C8.9 2 9.1 0.5 6 0.5Z" fill="#e8e8e8"/><path d="M6.2 11.5 C8.9 11.5 8.7 10.3 8.7 10.3 V8.9 H6 V8.4 H9.9 C9.9 8.4 11.7 8.6 11.7 5.8 C11.7 3 10.1 3.1 10.1 3.1 H9.2 V4.4 C9.2 4.4 9.3 6 7.6 6 H4.9 C4.9 6 3.3 6 3.3 7.5 V10 C3.3 10 3.1 11.5 6.2 11.5Z" fill="#e8e8e8"/></svg>
<div class="a t" style="left:654px;top:691.24px;font-size:12px;font-family:'Liberation Sans',sans-serif;color:#e4e5e7;transform:scaleX(0.965);transform-origin:0 0;">Adversarial-attack.py</div>
<div class="a t" style="left:781px;top:691.24px;font-size:12px;font-family:'Liberation Sans',sans-serif;color:#e4e5e7;transform:scaleX(0.95);transform-origin:0 0;">26-06-2024 22:49</div>
<svg class="a" style="left:635px;top:709.9px;" width="12" height="12" viewBox="0 0 12 12"><path d="M6 0.5 C3.3 0.5 3.5 1.7 3.5 1.7 V3.1 H6.2 V3.6 H2.3 C2.3 3.6 0.5 3.4 0.5 6.2 C0.5 9 2.1 8.9 2.1 8.9 H3 V7.6 C3 7.6 2.9 6 4.6 6 H7.3 C7.3 6 8.9 6 8.9 4.5 V2 C8.9 2 9.1 0.5 6 0.5Z" fill="#e8e8e8"/><path d="M6.2 11.5 C8.9 11.5 8.7 10.3 8.7 10.3 V8.9 H6 V8.4 H9.9 C9.9 8.4 11.7 8.6 11.7 5.8 C11.7 3 10.1 3.1 10.1 3.1 H9.2 V4.4 C9.2 4.4 9.3 6 7.6 6 H4.9 C4.9 6 3.3 6 3.3 7.5 V10 C3.3 10 3.1 11.5 6.2 11.5Z" fill="#e8e8e8"/></svg>
<div class="a t" style="left:654px;top:710.24px;font-size:12px;font-family:'Liberation Sans',sans-serif;color:#e4e5e7;transform:scaleX(0.965);transform-origin:0 0;">Applying_adversarial.py</div>
<div class="a t" style="left:781px;top:710.24px;font-size:12px;font-family:'Liberation Sans',sans-serif;color:#e4e5e7;transform:scaleX(0.95);transform-origin:0 0;">26-06-2024 22:49</div>
<svg class="a" style="left:635px;top:728.9px;" width="12" height="12" viewBox="0 0 12 12"><path d="M6 0.5 C3.3 0.5 3.5 1.7 3.5 1.7 V3.1 H6.2 V3.6 H2.3 C2.3 3.6 0.5 3.4 0.5 6.2 C0.5 9 2.1 8.9 2.1 8.9 H3 V7.6 C3 7.6 2.9 6 4.6 6 H7.3 C7.3 6 8.9 6 8.9 4.5 V2 C8.9 2 9.1 0.5 6 0.5Z" fill="#e8e8e8"/><path d="M6.2 11.5 C8.9 11.5 8.7 10.3 8.7 10.3 V8.9 H6 V8.4 H9.9 C9.9 8.4 11.7 8.6 11.7 5.8 C11.7 3 10.1 3.1 10.1 3.1 H9.2 V4.4 C9.2 4.4 9.3 6 7.6 6 H4.9 C4.9 6 3.3 6 3.3 7.5 V10 C3.3 10 3.1 11.5 6.2 11.5Z" fill="#e8e8e8"/></svg>
<div class="a t" style="left:654px;top:729.24px;font-size:12px;font-family:'Liberation Sans',sans-serif;color:#e4e5e7;transform:scaleX(0.965);transform-origin:0 0;">mnsit_Adversarial.py</div>
<div class="a t" style="left:781px;top:729.24px;font-size:12px;font-family:'Liberation Sans',sans-serif;color:#e4e5e7;transform:scaleX(0.95);transform-origin:0 0;">26-06-2024 22:38</div>
<div class="a" style="left:1028px;top:759px;width:26.5px;height:17px;background:#54687a;border-radius:0 0 3px 3px"></div>
<div class="a" style="left:1028px;top:758.6px;width:26.5px;height:2.6px;background:#2a8ce0;"></div>
<div class="a t" style="left:1031.5px;top:763.19px;font-size:11px;font-family:'Liberation Sans',sans-serif;color:#e0e1e3;transform:scaleX(0.9);transform-origin:0 0;">Files</div>
<div class="a" style="left:1056.3px;top:760.5px;width:25px;height:15.5px;background:#455364;border-radius:0 0 3px 3px"></div>
<div class="a t" style="left:1058.5px;top:763.19px;font-size:11px;font-family:'Liberation Sans',sans-serif;color:#e0e1e3;transform:scaleX(0.9);transform-origin:0 0;">Help</div>
<div class="a" style="left:0px;top:777px;width:1500px;height:20px;background:#44556a;"></div>
<div class="a t" style="left:967.2px;top:783.09px;font-size:11px;font-family:'Liberation Sans',sans-serif;color:#dfe2e6;transform:scaleX(0.915);transform-origin:0 0;">conda (Python 3.11.7)</div>
<svg class="a" style="left:1077px;top:785px;" width="11" height="10" viewBox="0 0 11 10"><path d="M1 1.5 L3.5 3.5 L1 5.5 M5 1.5 L7.5 3.5 L5 5.5" fill="none" stroke="#dfe2e6" stroke-width="1"/><path d="M4 8 Q7 9 9.5 5" fill="none" stroke="#dfe2e6" stroke-width="1"/></svg>
<div class="a t" style="left:1093.7px;top:783.09px;font-size:11px;font-family:'Liberation Sans',sans-serif;color:#dfe2e6;transform:scaleX(0.906);transform-origin:0 0;">Completions: conda</div>
<svg class="a" style="left:1194px;top:785px;" width="10" height="9" viewBox="0 0 10 9"><path d="M0.8 4.5 L3.5 7.5 L9 1" fill="none" stroke="#dfe2e6" stroke-width="1.3"/></svg>
<div class="a t" style="left:1210.4px;top:783.09px;font-size:11px;font-family:'Liberation Sans',sans-serif;color:#dfe2e6;transform:scaleX(0.87);transform-origin:0 0;">LSP: Python</div>
<div class="a t" style="left:1275.6px;top:783.09px;font-size:11px;font-family:'Liberation Sans',sans-serif;color:#dfe2e6;transform:scaleX(0.89);transform-origin:0 0;">Line 1, Col 1</div>
<div class="a t" style="left:1343.8px;top:783.09px;font-size:11px;font-family:'Liberation Sans',sans-serif;color:#dfe2e6;transform:scaleX(0.894);transform-origin:0 0;">UTF-8</div>
<div class="a t" style="left:1383.9px;top:783.09px;font-size:11px;font-family:'Liberation Sans',sans-serif;color:#dfe2e6;transform:scaleX(0.8);transform-origin:0 0;">CRLF</div>
<div class="a t" style="left:1418.7px;top:783.09px;font-size:11px;font-family:'Liberation Sans',sans-serif;color:#dfe2e6;transform:scaleX(0.87);transform-origin:0 0;">RW</div>
<div class="a t" style="left:1450.5px;top:783.09px;font-size:11px;font-family:'Liberation Sans',sans-serif;color:#dfe2e6;transform:scaleX(0.9);transform-origin:0 0;">Mem 76%</div>
<!-- p4 -->
<svg class="a" style="left:617.8px;top:241.2px" width="752.4" height="221.1" viewBox="0 0 752.4 221.1"><defs><g id="chart"><rect x="0" y="0" width="752.4" height="221.1" fill="#fff"/><polyline points="67.4,78.1 68.8,105.0 70.9,51.1 72.6,76.0 74.6,73.9 76.3,105.0 78.4,82.2 79.8,121.6 81.3,78.1 82.9,119.5 84.6,86.4 86.0,111.2 87.5,100.9 89.1,115.4 90.8,109.2 92.3,121.6 94.3,88.4 96.4,109.2 98.5,55.3 100.5,113.3 102.6,129.9 104.2,138.2 105.7,142.3 107.3,122.6 108.8,96.7 110.9,90.5 112.3,83.7 113.6,71.8 114.9,95.8 116.1,113.3 118.2,96.7 120.2,121.6 121.8,129.1 123.4,129.9 124.9,146.0 126.5,158.9 128.0,145.8 129.6,129.9 131.6,142.3 133.7,132.0 135.8,144.4 137.9,134.0 139.9,148.5 142.0,134.0 144.1,148.5 146.2,136.1 148.2,146.5 150.3,125.7 152.4,138.2 154.4,148.5 156.5,138.2 158.0,152.7 159.6,125.7 161.7,134.0 163.4,150.6 164.6,140.1 165.8,121.6 167.9,98.8 169.2,109.3 170.4,115.4 171.8,112.3 173.1,105.0 175.2,129.9 176.5,104.3 177.9,69.8 179.9,129.9 181.2,107.8 182.4,80.1 184.5,94.6 186.6,71.8 187.8,93.4 189.1,107.1 190.4,102.7 191.8,92.6 193.8,102.9 195.3,67.7 196.6,90.8 198.0,107.1 199.3,97.5 200.7,84.3 201.9,99.0 203.2,107.1 204.4,97.7 205.6,80.1 207.0,86.2 208.3,86.4 210.4,88.4 212.5,119.5 214.6,86.4 216.6,123.7 218.2,139.8 219.7,148.5 221.8,109.2 223.9,94.6 226.0,111.2 227.2,105.4 228.4,92.6 230.5,117.4 232.6,90.5 233.8,109.7 235.1,125.7 236.4,131.6 237.7,129.9 239.3,120.7 240.9,105.0 242.4,115.6 244.0,121.6 246.0,139.6 248.1,154.8 249.7,150.5 251.2,138.2 253.3,150.6 255.0,129.9 256.2,144.1 257.4,152.7 258.7,148.0 259.9,136.1 261.3,149.6 262.6,154.8 264.7,129.9 266.8,156.8 268.1,145.9 269.5,127.8 271.5,152.7 273.0,148.6 274.4,136.1 275.8,130.4 277.1,119.5 279.2,138.2 281.3,132.0 282.8,147.2 284.4,154.8 286.3,142.0 288.1,123.7 289.4,136.3 290.6,140.3 291.9,151.6 293.1,154.8 294.4,147.1 295.8,136.1 297.2,129.9 298.6,119.2 299.9,105.0 301.5,118.4 303.0,127.8 305.1,105.0 307.2,142.3 308.7,129.1 310.3,107.1 311.9,94.3 313.4,76.0 315.0,94.9 316.5,107.1 317.9,106.3 319.2,100.9 321.3,108.0 323.4,109.2 324.6,103.4 325.8,92.6 327.1,82.6 328.3,67.7 330.0,119.5 332.1,86.4 333.6,100.9 335.2,109.2 336.4,102.0 337.7,88.4 339.0,104.0 340.4,111.2 342.4,86.4 344.0,111.6 345.5,129.9 347.6,105.0 349.7,117.4 351.0,107.2 352.4,88.4 353.6,102.8 354.9,109.2 356.1,115.7 357.4,113.3 358.7,125.1 360.1,129.9 361.6,127.6 363.2,121.6 365.2,140.3 367.3,121.6 368.6,128.8 369.8,127.8 371.1,128.1 372.5,119.5 374.0,135.1 375.6,142.3 377.7,135.1 379.7,121.6 381.0,134.5 382.2,140.3 383.6,137.1 384.9,129.9 387.0,148.5 388.0,134.0 389.2,141.1 390.5,140.3 391.7,134.1 393.0,121.6 395.1,134.0 397.1,119.5 398.5,138.4 399.8,152.7 401.4,124.2 402.9,92.6 405.0,107.1 407.1,111.2 408.6,123.6 410.2,127.8 411.7,143.7 413.3,150.6 415.4,136.1 416.6,147.1 417.9,154.8 419.2,140.0 420.5,117.4 421.9,128.4 423.2,134.0 424.7,117.2 426.1,96.7 427.8,113.3 429.4,105.2 430.9,92.6 433.0,125.7 434.3,135.7 435.7,138.2 436.9,121.5 438.2,96.7 439.4,99.2 440.7,98.8 442.0,106.2 443.4,107.1 445.1,93.0 446.9,76.0 448.2,99.3 449.6,115.4 450.9,104.3 452.3,88.4 453.7,107.1 455.2,117.4 456.5,118.8 457.9,111.2 459.9,100.9 461.7,120.4 463.5,134.0 464.8,126.1 466.2,109.2 467.6,121.6 469.3,110.4 470.9,94.6 472.4,109.7 473.8,121.6 475.9,132.0 477.2,133.1 478.6,127.8 479.9,138.6 481.3,146.5 482.7,143.3 484.2,136.1 485.5,139.8 486.9,138.2 488.2,128.0 489.6,111.2 490.8,135.9 492.1,156.8 494.1,134.0 495.4,144.8 496.6,152.7 498.7,136.1 500.0,135.0 501.4,125.7 503.5,152.7 504.8,142.6 506.2,127.8 507.4,144.6 508.7,152.7 510.2,147.5 511.8,134.0 513.1,129.3 514.5,119.5 515.7,137.9 516.9,150.6 518.2,145.3 519.4,134.0 521.1,144.7 522.7,148.5 524.8,119.5 526.1,127.9 527.3,129.9 528.6,124.7 529.8,113.3 531.1,127.0 532.5,134.0 534.0,140.4 535.6,138.2 536.8,137.0 538.1,129.9 539.4,138.8 540.8,142.3 542.1,143.9 543.5,138.2 544.7,144.4 546.0,146.5 547.7,140.5 549.5,129.9 551.5,96.7 553.6,117.4 555.7,100.9 557.0,116.7 558.4,123.7 559.6,119.4 560.9,109.2 562.9,142.3 564.2,130.9 565.4,113.3 566.8,123.0 568.1,129.9 569.7,107.7 571.2,80.1 572.8,93.7 574.3,100.9 576.4,117.4 577.8,111.6 579.1,102.9 580.3,115.6 581.6,121.6 583.7,100.9 584.9,110.4 586.1,113.3 587.5,105.5 588.8,94.6 590.2,103.2 591.5,105.0 592.8,103.7 594.0,96.7 595.3,97.1 596.5,90.5 598.6,100.9 599.9,112.7 601.3,119.5 603.4,111.2 604.7,97.2 606.0,76.0 607.3,98.3 608.5,113.3 610.1,116.8 611.6,117.4 613.0,127.3 614.3,134.0 615.6,131.3 616.8,121.6 618.9,105.0 620.5,116.7 622.0,119.5 623.4,131.0 624.7,138.2 625.9,130.6 627.2,117.4 628.7,126.9 630.3,129.9 631.6,142.6 633.0,150.6 634.4,139.6 635.9,123.7 637.2,137.4 638.6,146.5 639.9,152.1 641.3,152.7 642.5,146.6 643.8,134.0 645.8,121.6 647.9,146.5 649.5,140.5 651.0,129.9 652.6,127.2 654.1,119.5 655.4,133.7 656.6,140.3 658.0,132.4 659.3,121.6 660.7,122.7 662.0,117.4 663.5,127.3 664.9,129.9 666.3,118.7 667.6,102.9 669.2,118.5 670.7,129.9 672.3,129.6 673.8,121.6 675.4,133.0 676.9,140.3 678.5,147.4 680.1,150.6 682.1,142.3 683.5,138.8 684.8,129.9 686.1,139.7 687.3,142.3 688.6,125.3 689.8,105.0 691.1,110.5 692.5,111.2 694.6,88.4 696.6,117.4 698.0,117.8 699.3,113.3 700.6,111.1 701.8,100.9 703.9,73.9 705.1,89.1 706.4,98.8 708.5,107.1 710.1,92.6 712.2,67.7 713.7,73.8 715.3,71.8" fill="none" stroke="#1414ff" stroke-width="1.9" stroke-linejoin="round"/><polyline points="67.4,49.0 69.5,76.0 70.9,26.2 72.3,41.8 73.6,47.0 74.9,62.0 76.3,65.6 78.4,148.5 80.4,57.3 81.9,76.0 84.0,59.4 86.0,71.8 88.1,80.1 89.7,78.9 91.2,65.6 92.8,71.3 94.3,63.6 96.4,76.0 97.5,61.0 98.7,34.5 99.9,99.2 101.2,150.6 102.4,120.7 103.7,86.4 105.2,133.2 106.8,171.3 108.3,127.3 109.9,69.8 111.7,64.7 113.6,49.0 115.7,117.4 116.9,103.2 118.2,76.0 119.7,107.7 121.3,134.0 122.8,117.7 124.4,92.6 125.6,138.4 126.9,177.6 128.9,82.2 131.0,158.9 132.4,158.5 133.7,148.5 135.3,159.7 136.8,161.0 138.1,168.3 139.3,171.3 140.7,168.3 142.0,158.9 144.1,171.3 146.2,158.9 148.2,169.3 150.3,121.6 151.9,151.0 153.4,173.4 155.5,158.9 157.6,175.5 159.6,150.6 160.9,168.6 162.1,173.4 163.5,168.9 164.8,152.7 166.9,94.6 168.2,121.4 169.6,142.3 170.8,127.6 172.1,100.9 173.6,128.5 175.2,150.6 176.5,115.3 177.9,69.8 179.1,116.0 180.4,156.8 181.9,118.5 183.5,76.0 184.7,79.2 186.0,69.8 187.3,101.9 188.7,127.8 190.2,110.2 191.8,86.4 193.5,81.9 195.3,63.6 196.6,80.3 198.0,84.3 199.3,84.7 200.7,78.1 202.1,93.2 203.6,94.6 204.9,85.9 206.3,67.7 208.3,78.1 209.9,85.6 211.5,82.2 213.0,82.2 214.6,76.0 216.1,91.0 217.7,92.6 218.9,137.4 220.2,171.3 221.5,134.6 222.9,84.3 224.4,95.9 226.0,94.6 227.4,93.0 228.8,84.3 230.2,115.1 231.5,138.2 233.6,88.4 235.4,128.7 237.1,163.1 238.5,137.9 239.8,107.1 241.9,94.6 244.0,146.5 245.3,129.2 246.7,107.1 248.1,175.5 249.7,169.7 251.2,156.8 252.8,169.1 254.3,171.3 255.7,167.2 257.0,158.9 258.3,172.6 259.5,175.5 261.1,171.0 262.6,158.9 264.2,172.9 265.7,179.6 267.3,174.3 268.8,156.8 270.4,170.6 272.0,175.5 273.5,168.8 275.1,154.8 276.6,163.4 278.2,163.1 279.7,162.4 281.3,150.6 282.8,168.5 284.4,181.7 285.9,177.2 287.5,158.9 289.6,168.4 291.6,173.4 293.0,167.8 294.3,150.6 295.8,152.7 297.2,142.3 299.3,82.2 300.7,112.4 302.0,138.2 304.1,86.4 305.6,132.7 307.2,167.2 309.3,71.8 311.1,66.4 313.0,53.2 314.2,88.2 315.5,113.3 317.6,82.2 318.8,120.6 320.0,154.8 321.9,114.6 323.8,69.8 325.8,62.4 327.9,49.0 330.0,82.2 331.5,78.6 333.1,61.5 335.2,142.3 336.7,107.0 338.3,65.6 339.8,111.9 341.4,146.5 342.8,61.5 344.2,114.8 345.5,154.8 347.6,92.6 349.7,88.9 351.8,71.8 353.3,81.8 354.9,84.3 356.9,121.3 359.0,150.6 360.6,125.2 362.1,90.5 364.2,161.0 366.3,86.4 368.3,154.8 370.4,90.5 371.9,158.9 373.5,88.4 375.4,133.7 377.3,167.2 378.5,160.5 379.7,148.5 381.3,160.5 382.9,161.0 384.4,172.2 386.0,171.3 387.4,158.9 388.9,166.3 390.5,161.0 392.0,135.3 393.6,105.0 395.7,150.6 397.7,113.3 399.8,173.4 401.4,137.7 402.9,88.4 404.5,92.0 406.0,90.5 407.6,111.9 409.1,125.7 410.4,152.6 411.6,169.3 413.0,162.4 414.3,142.3 415.7,162.7 417.0,175.5 418.3,144.8 419.5,100.9 420.8,128.4 422.0,146.5 423.3,115.9 424.7,78.1 426.0,105.6 427.4,125.7 429.5,78.1 430.7,109.0 432.0,134.0 434.0,117.4 436.1,158.9 437.3,125.1 438.6,86.4 440.2,146.5 442.1,122.4 444.0,92.6 445.4,85.6 446.9,67.7 448.2,97.5 449.6,113.3 451.6,82.2 453.0,110.0 454.3,132.0 455.6,114.6 456.8,92.6 458.4,97.4 459.9,88.4 461.3,126.3 462.6,154.8 463.9,127.8 465.1,92.6 466.7,107.2 468.2,115.4 469.8,101.7 471.3,78.1 472.9,126.7 474.4,163.1 475.8,148.7 477.1,125.7 478.6,146.5 480.0,158.9 481.9,162.3 483.8,161.0 485.3,137.5 486.9,100.9 488.4,139.4 490.0,173.4 492.1,154.8 493.6,170.7 495.2,177.6 496.7,173.4 498.3,156.8 499.8,158.5 501.4,154.8 503.0,170.8 504.5,175.5 506.1,172.9 507.6,156.8 509.2,171.4 510.7,175.5 512.3,173.2 513.8,158.9 515.9,170.9 518.0,177.6 519.5,172.5 521.1,158.9 523.2,175.5 525.2,152.7 526.8,118.2 528.3,78.1 529.7,101.9 531.0,113.3 532.3,137.6 533.5,154.8 535.1,123.8 536.6,84.3 538.2,127.6 539.7,156.8 541.6,159.0 543.5,148.5 544.9,163.7 546.4,165.1 547.6,125.9 548.8,78.1 550.2,125.0 551.5,163.1 552.9,126.2 554.2,78.1 555.7,116.7 557.1,146.5 558.5,117.9 559.8,82.2 561.2,127.7 562.5,165.1 563.8,131.7 565.0,92.6 566.6,123.5 568.1,146.5 569.9,107.8 571.6,55.3 573.0,76.6 574.3,84.3 576.4,161.0 577.8,137.1 579.1,102.9 580.5,116.8 582.0,121.6 584.1,148.5 585.7,121.2 587.4,86.4 588.8,91.0 590.3,90.5 592.2,119.8 594.0,142.3 595.3,119.2 596.5,84.3 597.9,91.7 599.2,86.4 601.0,114.1 602.7,134.0 604.4,107.9 606.0,69.8 607.3,96.4 608.5,111.2 610.6,158.9 611.9,139.5 613.1,109.2 614.4,138.3 615.8,156.8 617.3,129.5 618.9,90.5 621.0,158.9 622.5,137.9 624.1,109.2 625.4,138.5 626.8,156.8 628.9,105.0 630.6,139.6 632.4,167.2 633.7,162.4 635.1,148.5 636.3,166.9 637.6,173.4 639.1,167.5 640.7,150.6 642.1,175.5 644.0,142.8 645.8,102.9 647.9,167.2 649.2,151.1 650.4,121.6 651.8,145.5 653.1,158.9 654.7,169.0 656.2,169.3 657.8,151.7 659.3,129.9 661.4,113.9 663.5,88.4 664.8,127.0 666.2,158.9 667.4,127.0 668.7,84.3 669.9,129.1 671.1,165.1 672.5,131.8 673.8,86.4 675.4,122.7 676.9,148.5 678.2,161.8 679.4,163.1 681.5,154.8 682.9,156.5 684.2,150.6 685.5,126.9 686.9,92.6 688.3,89.0 689.8,73.9 691.1,81.1 692.5,76.0 694.6,65.6 695.9,114.0 697.3,154.8 698.5,137.2 699.7,107.1 701.8,152.7 703.9,49.0 706.0,71.8 708.0,146.5 709.3,104.1 710.5,49.0 712.2,47.0 713.7,51.4 715.3,44.9" fill="none" stroke="#ffa530" stroke-opacity="0.72" stroke-width="1.7" stroke-linejoin="round"/><rect x="35.5" y="18.30000000000001" width="712.0" height="172.8" fill="none" stroke="#555" stroke-width="1.1"/><path d="M32.5 182.9 H35.5" stroke="#555" stroke-width="1"/><text x="29.2" y="186.1" font-size="9" text-anchor="end" font-family="Liberation Sans" fill="#333">0.0</text><path d="M32.5 150.9 H35.5" stroke="#555" stroke-width="1"/><text x="29.2" y="154.1" font-size="9" text-anchor="end" font-family="Liberation Sans" fill="#333">0.2</text><path d="M32.5 118.9 H35.5" stroke="#555" stroke-width="1"/><text x="29.2" y="122.1" font-size="9" text-anchor="end" font-family="Liberation Sans" fill="#333">0.4</text><path d="M32.5 86.9 H35.5" stroke="#555" stroke-width="1"/><text x="29.2" y="90.1" font-size="9" text-anchor="end" font-family="Liberation Sans" fill="#333">0.6</text><path d="M32.5 54.9 H35.5" stroke="#555" stroke-width="1"/><text x="29.2" y="58.1" font-size="9" text-anchor="end" font-family="Liberation Sans" fill="#333">0.8</text><path d="M32.5 22.9 H35.5" stroke="#555" stroke-width="1"/><text x="29.2" y="26.1" font-size="9" text-anchor="end" font-family="Liberation Sans" fill="#333">1.0</text><path d="M68.2 191.10000000000002 V194.10000000000002" stroke="#555" stroke-width="1"/><text x="68.2" y="203.8" font-size="9" text-anchor="middle" font-family="Liberation Sans" fill="#333">0</text><path d="M197.6 191.10000000000002 V194.10000000000002" stroke="#555" stroke-width="1"/><text x="197.6" y="203.8" font-size="9" text-anchor="middle" font-family="Liberation Sans" fill="#333">200</text><path d="M327.0 191.10000000000002 V194.10000000000002" stroke="#555" stroke-width="1"/><text x="327.0" y="203.8" font-size="9" text-anchor="middle" font-family="Liberation Sans" fill="#333">400</text><path d="M456.5 191.10000000000002 V194.10000000000002" stroke="#555" stroke-width="1"/><text x="456.5" y="203.8" font-size="9" text-anchor="middle" font-family="Liberation Sans" fill="#333">600</text><path d="M585.9 191.10000000000002 V194.10000000000002" stroke="#555" stroke-width="1"/><text x="585.9" y="203.8" font-size="9" text-anchor="middle" font-family="Liberation Sans" fill="#333">800</text><path d="M715.3 191.10000000000002 V194.10000000000002" stroke="#555" stroke-width="1"/><text x="715.3" y="203.8" font-size="9" text-anchor="middle" font-family="Liberation Sans" fill="#333">1000</text><text x="391.2" y="214.6" font-size="9" text-anchor="middle" font-family="Liberation Sans" fill="#333">Time</text><text transform="translate(12.0,104.8) rotate(-90)" font-size="9" text-anchor="middle" font-family="Liberation Sans" fill="#333">Normalized power consumption scale</text><text x="391.2" y="13.2" font-size="11" text-anchor="middle" font-family="Liberation Sans" fill="#333">perturbation example</text><rect x="308.6" y="22.5" width="166.5" height="25.6" rx="2" fill="#fff" fill-opacity="0.85" stroke="#ddd" stroke-width="0.8"/><path d="M310.80000000000007 28.80000000000001 H327.70000000000005" stroke="#3a3aff" stroke-width="1.5"/><path d="M310.80000000000007 40.80000000000001 H327.70000000000005" stroke="#ffb850" stroke-width="1.5"/><text x="333.5" y="32.10000000000002" font-size="9" font-family="Liberation Sans" fill="#333">Actual power consumption data</text><text x="333.5" y="44.10000000000002" font-size="9" font-family="Liberation Sans" fill="#333">Predicted power consumption data</text></g></defs><use href="#chart"/></svg>
<svg class="a" style="left:1396.7px;top:122.7px" width="91.6" height="26.6" viewBox="0 0 752.4 221.1" preserveAspectRatio="none"><use href="#chart"/></svg>
<svg class="a" style="left:1396.7px;top:152.9px" width="91.6" height="26.6" viewBox="0 0 752.4 221.1" preserveAspectRatio="none"><use href="#chart"/></svg>
<svg class="a" style="left:1396.7px;top:183.5px" width="91.6" height="26.6" viewBox="0 0 752.4 221.1" preserveAspectRatio="none"><use href="#chart"/></svg>
<svg class="a" style="left:1396.7px;top:214.1px" width="91.6" height="26.6" viewBox="0 0 752.4 221.1" preserveAspectRatio="none"><use href="#chart"/></svg>
<div class="a" style="left:1396.3px;top:244px;width:92.2px;height:28.6px;background:#1a72bb;border-radius:2px"></div>
<svg class="a" style="left:1396.7px;top:245px" width="91.6" height="26.6" viewBox="0 0 752.4 221.1" preserveAspectRatio="none"><use href="#chart"/></svg>
<!-- p5 -->
<div class="a" style="left:0px;top:797px;width:1500px;height:47px;background:#201f1c;"></div>
<div class="a" style="left:0px;top:797px;width:1500px;height:1px;background:#2b2a27;"></div>
<svg class="a" style="left:457px;top:809.5px;" width="23" height="23" viewBox="0 0 23 23"><defs><linearGradient id="wl" x1="0" y1="0" x2="1" y2="1"><stop offset="0" stop-color="#6fd0fb"/><stop offset="1" stop-color="#1a8ff0"/></linearGradient></defs><rect x="0" y="0" width="10.8" height="10.8" rx="0.8" fill="url(#wl)"/><rect x="12" y="0" width="10.8" height="10.8" rx="0.8" fill="url(#wl)"/><rect x="0" y="12" width="10.8" height="10.8" rx="0.8" fill="url(#wl)"/><rect x="12" y="12" width="10.8" height="10.8" rx="0.8" fill="url(#wl)"/></svg>
<div class="a" style="left:494px;top:805px;width:212.5px;height:30.7px;background:#f2f2f2;border-radius:15.5px"></div>
<svg class="a" style="left:505px;top:813.5px;" width="14" height="14" viewBox="0 0 14 14"><circle cx="5.8" cy="5.8" r="4.8" fill="none" stroke="#303030" stroke-width="1.6"/><path d="M9.3 9.3 L13 13" stroke="#303030" stroke-width="1.8" stroke-linecap="round"/></svg>
<div class="a t" style="left:529px;top:815.35px;font-size:14px;font-family:'Liberation Sans',sans-serif;color:#6a6a6a;transform:scaleX(0.93);transform-origin:0 0;">Search</div>
<svg class="a" style="left:658px;top:807px;" width="48" height="29" viewBox="0 0 48 29"><path d="M6 28 L10 10 Q14 2 24 1.5 Q36 1 42 6 L47 14 Q46 24 36 28Z" fill="#c07a45"/><path d="M14 28 V12 H36 V28Z" fill="#d89060"/><path d="M16 8 H34 V12 H16Z" fill="#a8683a"/><rect x="18" y="14" width="2" height="14" fill="#8a5028"/><rect x="30" y="14" width="2" height="14" fill="#8a5028"/><rect x="23" y="19" width="4" height="9" fill="#2a2040"/><path d="M6 28 Q2 27 4 24 L9 20Z" fill="#b06a38"/></svg>
<svg class="a" style="left:719px;top:808px;" width="25" height="25" viewBox="0 0 25 25"><circle cx="12" cy="12" r="11.5" fill="#de4437"/><path d="M12 12 L2.1 17.8 A11.5 11.5 0 0 0 17.8 22 Z" fill="#1da462"/><path d="M12 12 L17.8 22 A11.5 11.5 0 0 0 23.5 12 L22 7 Z" fill="#ffcd40"/><path d="M12 12 L2.1 17.8 A11.5 11.5 0 0 1 1.8 6 Z" fill="#1da462"/><circle cx="12" cy="12" r="5.3" fill="#fff"/><circle cx="12" cy="12" r="4.2" fill="#4a8af4"/></svg>
<div class="a" style="left:728px;top:836.3px;width:6.5px;height:2.8px;background:#9a9a9a;border-radius:1.4px"></div>
<svg class="a" style="left:763px;top:808px;" width="23" height="24" viewBox="0 0 23 24"><defs><radialGradient id="ff" cx="0.4" cy="0.7" r="0.8"><stop offset="0" stop-color="#ffbd3f"/><stop offset="0.5" stop-color="#ff6a3a"/><stop offset="1" stop-color="#e3245c"/></radialGradient></defs><circle cx="11.5" cy="13" r="10.5" fill="url(#ff)"/><path d="M4 6 Q8 0 14 1 Q21 3 22 10 Q19 5 15 6Z" fill="#ffb22f"/><circle cx="11" cy="13" r="5" fill="#7a3be0"/><path d="M6 12 Q9 8 13 9 Q10 11 11 13Z" fill="#ff9a3a"/></svg>
<div class="a" style="left:771px;top:836.3px;width:6.5px;height:2.8px;background:#9a9a9a;border-radius:1.4px"></div>
<svg class="a" style="left:805px;top:808px;" width="25" height="24" viewBox="0 0 25 24"><defs><linearGradient id="eg" x1="0" y1="0" x2="1" y2="1"><stop offset="0" stop-color="#39c98b"/><stop offset="0.5" stop-color="#1b9de2"/><stop offset="1" stop-color="#0c59a4"/></linearGradient></defs><circle cx="12" cy="12" r="11.5" fill="url(#eg)"/><path d="M5 14 Q5 7 12 6.5 Q19 7 19 12 Q19 14.5 15 14.5 H8.5 Q9 19 14 19 Q18 19 21 17 Q18 23 12 23 Q5 22 5 14Z" fill="#0f4e93"/><path d="M10 12 Q11 9 14 9.5 Q16.5 10 16 12Z" fill="#52d39b"/></svg>
<div class="a" style="left:814px;top:836.3px;width:6.5px;height:2.8px;background:#9a9a9a;border-radius:1.4px"></div>
<svg class="a" style="left:850px;top:808px;" width="20" height="25" viewBox="0 0 20 25"><path d="M3 2 L7 0 H13 L17 2 L20 4 L18.5 15 Q17 20 10 24.5 Q3 20 1.5 15 L0 4Z" fill="#f05a25"/><path d="M4.5 6.5 L7.5 5.5 L10 6.5 L12.5 5.5 L15.5 6.5 L16 10 L14 13.5 L13.5 17 L10 20 L6.5 17 L6 13.5 L4 10Z" fill="#fff"/><path d="M7 10.5 L9 11.5 M13 10.5 L11 11.5 M8.5 16 L10 17 L11.5 16" stroke="#f05a25" stroke-width="1"/></svg>
<div class="a" style="left:857px;top:836.3px;width:6.5px;height:2.8px;background:#9a9a9a;border-radius:1.4px"></div>
<svg class="a" style="left:890px;top:809px;" width="26" height="23" viewBox="0 0 26 23"><path d="M0.5 1.5 Q0.5 0.5 1.5 0.5 H9 L11 3 H24 Q25 3 25 4 V21 Q25 22 24 22 H1.5 Q0.5 22 0.5 21Z" fill="#e9a82a"/><path d="M0.5 6 H25 V21 Q25 22 24 22 H1.5 Q0.5 22 0.5 21Z" fill="#fcd55c"/><rect x="7.5" y="15" width="11" height="5" rx="1" fill="#1f7ee0"/></svg>
<div class="a" style="left:900px;top:836.3px;width:6.5px;height:2.8px;background:#9a9a9a;border-radius:1.4px"></div>
<svg class="a" style="left:937px;top:808px;" width="19" height="25" viewBox="0 0 19 25"><rect x="0.5" y="1.5" width="17.5" height="22" rx="1.5" fill="#3eb0e8"/><rect x="0.5" y="20" width="17.5" height="3.5" fill="#d8dde3"/><path d="M2 0 V3 M4.5 0 V3 M7 0 V3 M9.5 0 V3 M12 0 V3 M14.5 0 V3 M17 0 V3" stroke="#d8dde3" stroke-width="0.9"/><path d="M4 7.5 H14.5 M4 11 H14.5 M4 14.5 H14.5" stroke="#1a4f77" stroke-width="1.3"/></svg>
<div class="a" style="left:943px;top:836.3px;width:6.5px;height:2.8px;background:#9a9a9a;border-radius:1.4px"></div>
<div class="a" style="left:970.2px;top:800.5px;width:38.4px;height:39.7px;background:#2e2d2b;border-radius:4px"></div>
<svg class="a" style="left:977px;top:809px;" width="24" height="23" viewBox="0 0 24 23"><rect x="0.4" y="0.2" width="23.2" height="22.8" rx="3.5" fill="#fbfafa"/><path d="M3.8 3.8 H19.5 V8 M3.8 3.8 V19.3 H13 M3.8 7.2 H16 M7.5 3.8 V8 M11.5 3.8 V7.2 M16 3.8 V7.2" fill="none" stroke="#a8302c" stroke-width="1.2"/><path d="M4 12.5 L12.5 5.5 M4 12.5 L11.5 19 M6.5 10.5 V17" fill="none" stroke="#a8302c" stroke-width="1.2"/><text x="11.6" y="19.6" font-size="14.5" font-family="Liberation Sans" fill="#3c3c3e">s</text></svg>
<div class="a" style="left:981.5px;top:837px;width:14px;height:2.8px;background:#f0a04b;border-radius:1.4px"></div>
<svg class="a" style="left:1020px;top:808px;" width="24" height="24" viewBox="0 0 24 24"><rect x="0.3" y="0.5" width="23" height="23" rx="2.5" fill="#ea5b34"/><path d="M17 7 H9 Q6 7 6 10 Q6 12.5 9 12.5 H14.5 Q17.5 12.5 17.5 15.5 Q17.5 18 14.5 18 H6" fill="none" stroke="#fff" stroke-width="3"/><circle cx="20.5" cy="3.5" r="6" fill="#e35c45" stroke="#3a1c16" stroke-width="0.8"/></svg>
<div class="a" style="left:1029px;top:836.3px;width:6.5px;height:2.8px;background:#9a9a9a;border-radius:1.4px"></div>
<svg class="a" style="left:1318px;top:812px;" width="13" height="17" viewBox="0 0 13 17"><rect x="3.8" y="0.8" width="5.4" height="10" rx="2.7" fill="none" stroke="#d9a05f" stroke-width="1.3"/><path d="M1 7.5 Q1 12.5 6.5 12.5 Q12 12.5 12 7.5 M6.5 12.5 V16" fill="none" stroke="#d9a05f" stroke-width="1.3"/></svg>
<div class="a t" style="left:1350.2px;top:807.61px;font-size:11.8px;font-family:'Liberation Sans',sans-serif;color:#f2f2f2;transform:scaleX(0.92);transform-origin:0 0;">ENG</div>
<div class="a t" style="left:1355.3px;top:823.01px;font-size:11.8px;font-family:'Liberation Sans',sans-serif;color:#f2f2f2;transform:scaleX(0.92);transform-origin:0 0;">IN</div>
<svg class="a" style="left:1390px;top:813px;" width="17" height="14" viewBox="0 0 17 14"><path d="M0.8 4.8 Q8.3 -1.5 15.8 4.8 M3.2 7.3 Q8.3 3 13.4 7.3 M5.6 9.8 Q8.3 7.5 11 9.8" fill="none" stroke="#f0f0f0" stroke-width="1.3"/><circle cx="8.3" cy="12.3" r="1.3" fill="#f0f0f0"/></svg>
<svg class="a" style="left:1413px;top:813px;" width="18" height="15" viewBox="0 0 18 15"><path d="M1 4.5 H4 L8.5 1 V13.5 L4 10 H1Z" fill="none" stroke="#f0f0f0" stroke-width="1.2"/><path d="M11 4.5 Q12.5 7.2 11 10 M13.2 2.8 Q16 7.2 13.2 11.8 M15.3 1 Q19 7.2 15.3 13.5" fill="none" stroke="#f0f0f0" stroke-width="1.2"/></svg>
<svg class="a" style="left:1437px;top:812px;" width="17" height="15" viewBox="0 0 17 15"><rect x="0.7" y="3.5" width="13.5" height="10" rx="2" fill="none" stroke="#f0f0f0" stroke-width="1.2"/><rect x="14.5" y="6.5" width="1.8" height="4" fill="#f0f0f0"/><path d="M2 12.5 L10 5 H12.5 V12.5Z" fill="#f0f0f0"/><path d="M4 0.5 L2.5 4 H5 L3.5 7.5" fill="none" stroke="#f0f0f0" stroke-width="1"/></svg>
<svg class="a" style="left:1466px;top:813px;" width="14" height="15" viewBox="0 0 14 15"><path d="M2 11 V6.5 Q2 1 7 1 Q12 1 12 6.5 V11 L13.3 12.3 H0.7Z" fill="none" stroke="#f0f0f0" stroke-width="1.2"/><path d="M5 13.8 Q7 15.5 9 13.8" fill="none" stroke="#f0f0f0" stroke-width="1.2"/></svg>

</body></html>
